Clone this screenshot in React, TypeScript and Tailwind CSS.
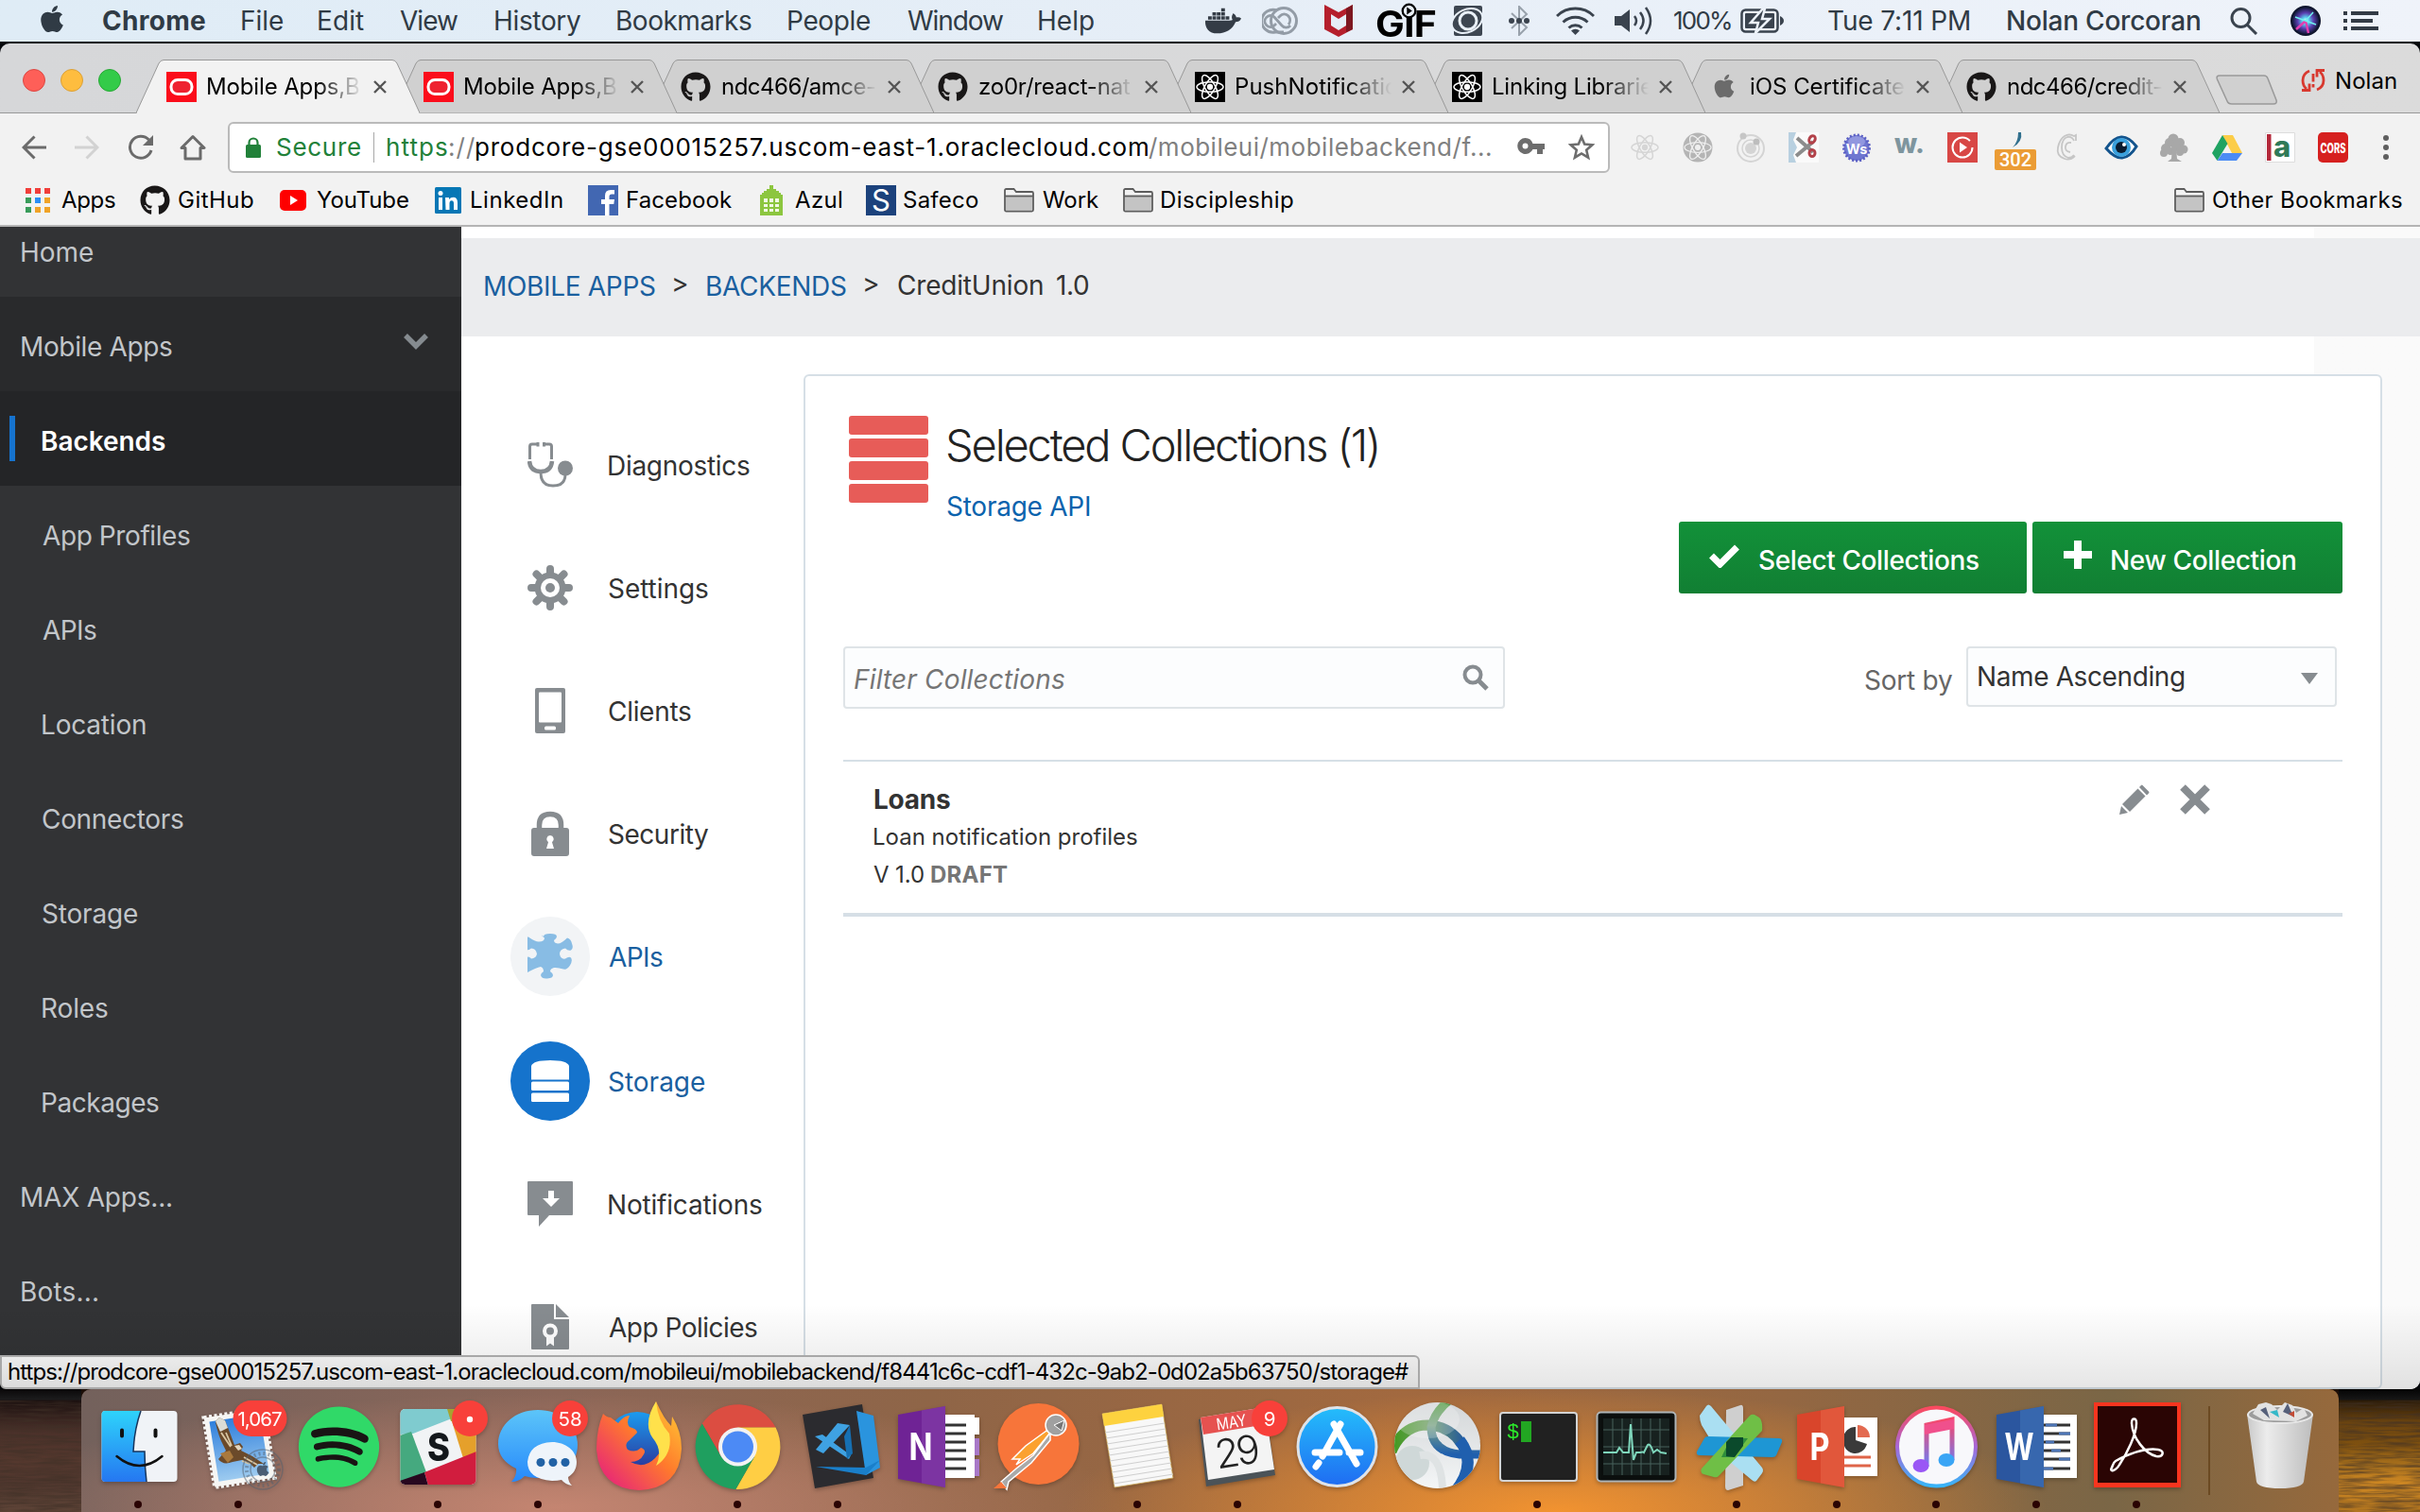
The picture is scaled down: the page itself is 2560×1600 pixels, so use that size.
import React, { useLayoutEffect, useRef, useState } from "react";
import { FaApple, FaDocker, FaGithub, FaSpotify } from "react-icons/fa";

/* Text whose ink is tracked to span exactly `w` pixels. */
function T({ w, className = "", children }: { w: number; className?: string; children: string }) {
  const ref = useRef<HTMLSpanElement>(null);
  const [fit, setFit] = useState({ ls: 0, ml: 0 });
  useLayoutEffect(() => {
    if (!ref.current) return;
    const cs = getComputedStyle(ref.current);
    const ctx = document.createElement("canvas").getContext("2d");
    if (!ctx) return;
    ctx.font = `${cs.fontStyle} ${cs.fontWeight} ${cs.fontSize} ${cs.fontFamily}`;
    const m = ctx.measureText(children);
    const bearings = m.width - (m.actualBoundingBoxRight + m.actualBoundingBoxLeft);
    const ink = ref.current.getBoundingClientRect().width - bearings;
    setFit({ ls: children.length > 1 ? (w - ink) / (children.length - 1) : 0, ml: m.actualBoundingBoxLeft });
  }, [w, children]);
  return (
    <span className={`block shrink-0 whitespace-pre ${className}`} style={{ width: w, letterSpacing: fit.ls, textIndent: fit.ml }}>
      <span ref={ref}>{children}</span>
    </span>
  );
}

/* ---------- menu bar ---------- */
const menus = [
  { t: "Chrome", w: 108, box: "w-[147px] font-bold" },
  { t: "File", w: 43, box: "w-[81px]" },
  { t: "Edit", w: 48, box: "w-[86px]" },
  { t: "View", w: 61, box: "w-[101px]" },
  { t: "History", w: 90, box: "w-[129px]" },
  { t: "Bookmarks", w: 142, box: "w-[181px]" },
  { t: "People", w: 86, box: "w-[126px]" },
  { t: "Window", w: 101, box: "w-[139px]" },
  { t: "Help", w: 58, box: "w-[176px]" },
];

function MenuBar() {
  return (
    <div className="flex h-[44px] shrink-0 items-center bg-linear-to-r from-[#dfecf6] via-[#e6eef7] to-[#eff3fa] pl-[42px] text-[28px] leading-none text-[#303b45]">
      <FaApple className="mr-[38px] -mt-[4px] h-[32px] w-[32px] shrink-0 -ml-[3px]" />
      {menus.map((m) => (
        <div key={m.t} className={`shrink-0 ${m.box}`}>
          <T w={m.w}>{m.t}</T>
        </div>
      ))}
      <FaDocker className="h-[38px] w-[38px] shrink-0 text-[#343c46]" />
      <svg className="ml-[22px] h-[30px] w-[38px] shrink-0" viewBox="0 0 38 30" fill="none" stroke="#939ca6" strokeWidth="3">
        <circle cx="23" cy="15" r="13.500" />
        <path d="M16 4A12 12 0 1 0 14 27h9" />
        <path d="M30 20a6 6 0 0 1-9 0l-8-9a6 6 0 1 0 0 9l2-2M17 12l2-2a6 6 0 0 1 9 0 7 7 0 0 1 0 9" strokeWidth="2.800" />
      </svg>
      <svg className="ml-[28px] h-[34px] w-[30px] shrink-0" viewBox="0 0 30 34">
        <path d="M0 0l15 8L30 0v26l-15 8L0 26z" fill="#b51f2c" />
        <path d="M7 10l8 5 8-5v12l-8 5-8-5z" fill="#e6eef7" />
        <path d="M23 4l7-4v26l-7 3z" fill="#7d1720" />
      </svg>
      <div className="relative ml-[25px] h-[38px] w-[62px] shrink-0 text-black">
        <span className="absolute top-[4px] -left-[1px] origin-left scale-x-[1.08] text-[38px] leading-[36px] font-bold tracking-[-0.5px]">GıF</span>
        <svg className="absolute top-0 left-[26px] h-[17px] w-[17px]" viewBox="0 0 15 15">
          <circle cx="7.500" cy="7.500" r="6" fill="#e9f0f8" stroke="#000" strokeWidth="2" />
          <path d="M5.500 4v7l5-3.500z" />
        </svg>
      </div>
      <svg className="ml-[16px] h-[32px] w-[36px] shrink-0" viewBox="0 0 36 32">
        <rect x="4" y="0" width="30" height="32" rx="2" fill="#3d4651" />
        <ellipse cx="18" cy="16" rx="17" ry="12" fill="#3d4651" stroke="#e9f0f8" strokeWidth="2" transform="rotate(-25 18 16)" />
        <circle cx="19" cy="16" r="9" fill="none" stroke="#e9f0f8" strokeWidth="3" />
      </svg>
      <svg className="ml-[26px] h-[32px] w-[22px] shrink-0" viewBox="0 0 22 32" fill="none">
        <path d="M3 8l16 15-8 8V1l8 8L3 24" stroke="#98a1ab" strokeWidth="2" />
        <g fill="#3a434e">
          <circle cx="3" cy="16" r="3" />
          <circle cx="11" cy="16" r="3" />
          <circle cx="19" cy="16" r="3" />
        </g>
      </svg>
      <svg className="ml-[28px] h-[30px] w-[41px] shrink-0" viewBox="0 0 41 30" fill="none" stroke="#3a434e" strokeWidth="3">
        <path d="M1 10a28 28 0 0 1 39 0M7.500 16.500a19 19 0 0 1 26 0M13.500 22.500a10.500 10.500 0 0 1 14 0" />
        <path d="M20.500 30l-4.500-4.500a6.500 6.500 0 0 1 9 0z" fill="#3a434e" stroke="none" />
      </svg>
      <svg className="ml-[21px] h-[30px] w-[42px] shrink-0" viewBox="0 0 42 30" fill="none" stroke="#3a434e" strokeWidth="2.500">
        <path d="M0 10h7l9-7v24l-9-7H0z" fill="#3a434e" stroke="none" />
        <path d="M21 10q4 5 0 10M27 6q7 9 0 18M33 1q10 14 0 28" />
      </svg>
      <T w={60} className="ml-[21px] text-[26px]">100%</T>
      <svg className="ml-[10px] h-[26px] w-[46px] shrink-0" viewBox="0 0 46 26">
        <rect x="1.500" y="1.500" width="38" height="23" rx="4" fill="none" stroke="#3a434e" strokeWidth="2.500" />
        <rect x="5" y="5" width="31" height="16" rx="1" fill="#3a434e" />
        <path d="M42 8v10q4-2 4-5t-4-5z" fill="#3a434e" />
        <path d="M24 0L11 15h8l-3 11L31 11h-8l3-11z" fill="#3a434e" stroke="#edf2f9" strokeWidth="2.500" />
      </svg>
      <T w={149} className="ml-[47px]">Tue 7:11 PM</T>
      <T w={203} className="ml-[41px] font-medium">Nolan Corcoran</T>
      <svg className="ml-[32px] h-[30px] w-[30px] shrink-0" viewBox="0 0 30 30" fill="none" stroke="#3a434e" strokeWidth="3">
        <circle cx="11.500" cy="12" r="9.500" />
        <path d="M18 19l10 10" />
      </svg>
      <svg className="ml-[34px] h-[32px] w-[32px] shrink-0" viewBox="0 0 32 32">
        <defs>
          <radialGradient id="siri">
            <stop offset="0" stopColor="#fff" />
            <stop offset=".25" stopColor="#5ad0f0" />
            <stop offset=".6" stopColor="#5a3fb0" />
            <stop offset="1" stopColor="#141a3c" />
          </radialGradient>
        </defs>
        <circle cx="16" cy="16" r="16" fill="#10162e" />
        <circle cx="16" cy="16" r="14" fill="url(#siri)" />
        <path d="M16 16l3 13M16 16L6 25" stroke="#e13fb0" strokeWidth="2.500" />
        <path d="M16 16l8-9M16 16L5 12M16 16l11 4" stroke="#6ff0ee" strokeWidth="1.500" />
      </svg>
      <svg className="ml-[24px] h-[20px] w-[37px] shrink-0" viewBox="0 0 37 20" fill="#333b45">
        <path d="M0 0h4v4H0zM8 0h29v4H8zM0 8h4v4H0zM8 8h23v4H8zM0 16h4v4H0zM8 16h29v4H8z" />
      </svg>
    </div>
  );
}

/* ---------- tabs ---------- */
const Oracle = () => (
  <svg viewBox="0 0 32 32" className="h-full w-full">
    <path d="M0 0h32v32H0z" fill="#fb0d1b" />
    <rect x="5" y="8.500" width="22" height="15" rx="7" fill="#ee2230" stroke="#fff" strokeWidth="3" />
  </svg>
);
const Atom = ({ color, sw = 1.5 }: { color: string; sw?: number }) => (
  <g fill="none" stroke={color} strokeWidth={sw}>
    <ellipse cx="16" cy="16" rx="14" ry="5.300" />
    <ellipse cx="16" cy="16" rx="14" ry="5.300" transform="rotate(60 16 16)" />
    <ellipse cx="16" cy="16" rx="14" ry="5.300" transform="rotate(120 16 16)" />
    <circle cx="16" cy="16" r="2.400" fill={color} />
  </g>
);
const ReactFav = () => (
  <svg viewBox="0 0 32 32" className="h-full w-full">
    <path d="M0 0h32v32H0z" />
    <Atom color="#fff" />
  </svg>
);
const Hub = () => <FaGithub className="h-full w-full text-[#191717]" />;
const tabs = [
  { t: "Mobile Apps,B", w: 160, I: Oracle, z: "z-[9]" },
  { t: "Mobile Apps,B", w: 160, I: Oracle, z: "z-[8]" },
  { t: "ndc466/amce-", w: 162, I: Hub, z: "z-[7]" },
  { t: "zo0r/react-nat", w: 160, I: Hub, z: "z-[6]" },
  { t: "PushNotificatio", w: 171, I: ReactFav, z: "z-[5]" },
  { t: "Linking Librarie", w: 168, I: ReactFav, z: "z-[4]" },
  { t: "iOS Certificate", w: 162, I: () => <FaApple className="-mt-[1px] h-[28px] w-[24px] text-[#6b6b6b]" />, z: "z-[3]" },
  { t: "ndc466/credit-", w: 163, I: Hub, z: "z-[2]" },
];

function TabStrip() {
  return (
    <div className="relative flex h-[74px] shrink-0 items-end rounded-t-[10px] bg-linear-to-r from-[#d6d7d9] to-[#dbdbdb]">
      <div className="absolute inset-x-0 bottom-0 z-[8] h-px bg-[#999]" />
      <div className="flex h-full w-[144px] shrink-0 items-center gap-[16px] pt-[3px] pl-[24px]">
        <div className="size-[24px] rounded-full border border-[#dd4742] bg-[#fe5f58]" />
        <div className="size-[24px] rounded-full border border-[#dba036] bg-[#febd3f]" />
        <div className="size-[24px] rounded-full border border-[#26a934] bg-[#33cb49]" />
      </div>
      {tabs.map(({ t, w, I, z }, i) => (
        <div key={i} className={`relative -mr-[28px] flex h-[57px] w-[300px] shrink-0 items-center pl-[32px] ${z}`}>
          <svg className="absolute inset-0" width="300" height="57" viewBox="0 0 300 57">
            <path d="M0 56.500L24 4Q26 .5 29 .5H271Q274 .5 276 4L300 56.500" fill={i === 0 ? "#f2f2f2" : "#d0d0d0"} stroke="#989898" />
            {i === 0 && <path d="M1 56.500h298" stroke="#f2f2f2" />}
          </svg>
          <div className="relative flex size-[32px] shrink-0 items-center justify-center">
            <I />
          </div>
          <div className="relative ml-[12px] w-[164px] overflow-hidden mask-r-from-70% text-[24px] leading-[32px] whitespace-nowrap text-black">
            <T w={w}>{t}</T>
          </div>
          <svg className="relative ml-[11px] h-[14px] w-[14px] shrink-0" viewBox="0 0 14 14">
            <path d="M1 1l12 12M13 1L1 13" stroke="#555" strokeWidth="2.400" />
          </svg>
        </div>
      ))}
      <svg className="ml-[24px] mb-[9px] h-[32px] w-[66px] shrink-0" viewBox="0 0 66 32">
        <path d="M4 1h47q3 0 4 3l9 23q1 4-3 4H17q-4 0-5-3L1.500 5Q0 1 4 1z" fill="#d0d0d0" stroke="#999" strokeWidth="1.500" />
      </svg>
      <svg className="ml-[24px] mb-[23px] h-[24px] w-[26px] shrink-0" viewBox="0 0 26 24" fill="none" stroke="#d8392f" strokeWidth="2.800">
        <path d="M9 2Q2 5 2 12q0 6 4 9M1 22.500h8v-7M17 22q7-3 7-10 0-6-4-9M25 1.500h-8v7" />
        <path d="M13 5v8.500M13 16v3.500" />
      </svg>
      <T w={63} className="ml-[12px] mb-[16px] text-[24px] leading-[36px] text-black">Nolan</T>
    </div>
  );
}

/* ---------- toolbar ---------- */
const exts: React.ReactNode[] = [
  <Atom color="#d5d5d5" />,
  <><circle cx="16" cy="16" r="15.500" fill="#b5b5b5" /><Atom color="#efefef" sw={1.3} /></>,
  <g fill="none" stroke="#d4d4d4" strokeWidth="2"><circle cx="16" cy="17" r="14" /><circle cx="16" cy="17" r="6" fill="#d4d4d4" stroke="none" /><circle cx="16" cy="17" r="9" strokeWidth="1.500" /><circle cx="8" cy="4" r="3.500" fill="#c6c6c6" stroke="none" /><circle cx="22" cy="10" r="3.500" fill="#bdbdbd" stroke="none" /></g>,
  <><path d="M0 0h32v32H0z" fill="#fafafa" /><path d="M0 0h8l-3 8 4 8-4 8 3 8H0z" fill="#b8d0e0" /><path d="M9 6l17 15M8 25L26 10" stroke="#8c8c8c" strokeWidth="4" /><g fill="none" stroke="#b3424a" strokeWidth="3"><ellipse cx="25" cy="7.500" rx="3" ry="4" transform="rotate(30 25 7.500)" /><ellipse cx="25" cy="22" rx="3" ry="3.500" /></g></>,
  <><circle cx="16" cy="16.500" r="13.500" fill="#6f76d0" stroke="#5a5fc4" strokeWidth="3" strokeDasharray="2 2" /><ellipse cx="16" cy="10" rx="9" ry="6" fill="#a9aeea" opacity=".6" /><text x="16" y="22.500" textAnchor="middle" fontSize="14.500" fontWeight="700" fill="#fff">Ws</text></>,
  <text x="16" y="22" textAnchor="middle" fontSize="28" fontWeight="800" fill="#7e959e">w.</text>,
  <><path d="M0 0h32v32H0z" fill="#d84745" /><circle cx="16" cy="16" r="10.500" fill="none" stroke="#fff" strokeWidth="2" strokeDasharray="58 8" /><path d="M13 10.500v11l8-5.500z" fill="#fff" /></>,
  <path d="M22 0q2 10-9 16 6-6 6-16z" fill="#31708e" />,
  <path d="M24 9V3l-2 1Q17 1 12 4T5 16t7 12q6 2 11-3M22 9q-2-5-7-4-6 2-6 11t7 11q4 0 6-3M19 11q-5-1-6 4t5 6" fill="none" stroke="#c6c6c6" strokeWidth="1.800" />,
  <><path d="M0 17Q16-6 32 15 18 38 0 17z" fill="#fff" stroke="#13548d" strokeWidth="3" /><circle cx="16" cy="16" r="10" fill="#3aa0dc" /><circle cx="16" cy="16" r="6" fill="#0a1c30" /><circle cx="19" cy="13" r="2" fill="#fff" /></>,
  <g fill="#a8a8a8"><circle cx="15" cy="7" r="5.500" /><circle cx="11" cy="11" r="5" /><circle cx="22" cy="11" r="5" /><circle cx="7" cy="17" r="5" /><circle cx="18" cy="15" r="5" /><circle cx="26" cy="18" r="4.500" /><circle cx="5" cy="22" r="4" /><circle cx="12" cy="20" r="4" /><circle cx="22" cy="21" r="4" /><path d="M14 17h4l1 11 5 3H9l4-3z" /></g>,
  <><path d="M11 3h11l10 19H21z" fill="#fccd48" /><path d="M11 3L0 22l5.500 8L16.500 12z" fill="#1fa362" /><path d="M11 22h21l-6 8H5.500z" fill="#4b8bf5" /></>,
  <><path d="M.5 .5h31v31H.5z" fill="#fff" stroke="#ddd" strokeWidth="1" /><path d="M2 2h4.500v28H2z" fill="#b3283a" /><text x="18" y="26" textAnchor="middle" fontSize="31" fontWeight="800" fill="#2f7a58">a</text></>,
  <><rect width="32" height="32" rx="5" fill="#d6201f" /><text x="16" y="21.500" textAnchor="middle" fontSize="14" fontWeight="800" fill="#fff" textLength="27" lengthAdjust="spacingAndGlyphs">CORS</text></>,
];

function Toolbar() {
  return (
    <div className="flex h-[71px] shrink-0 items-center bg-[#f2f2f2]">
      <svg className="ml-[23px] h-[26px] w-[26px] shrink-0" viewBox="0 0 26 26" fill="none" stroke="#6b6b6b" strokeWidth="3">
        <path d="M26 13H3M13.500 1.500L2 13l11.500 11.500" />
      </svg>
      <svg className="ml-[30px] h-[26px] w-[26px] shrink-0" viewBox="0 0 26 26" fill="none" stroke="#d2d2d2" strokeWidth="3">
        <path d="M0 13h23M12.500 1.500L24 13 12.500 24.500" />
      </svg>
      <svg className="ml-[30px] h-[28px] w-[28px] shrink-0" viewBox="0 0 28 28" fill="none" stroke="#6b6b6b" strokeWidth="3">
        <path d="M25 17a11.500 11.500 0 1 1-2.500-11" />
        <path d="M27 1v11H16z" fill="#6b6b6b" stroke="none" />
      </svg>
      <svg className="ml-[27px] h-[28px] w-[28px] shrink-0" viewBox="0 0 28 28" fill="none" stroke="#6b6b6b" strokeWidth="3">
        <path d="M2 14.500L14 2.500l12 12h-4V26H6V14.500z" strokeLinejoin="round" />
      </svg>
      <div className="ml-[23px] flex h-[54px] w-[1462px] shrink-0 items-center rounded-[6px] border-2 border-[#bababa] bg-white text-[26px] leading-none">
        <svg className="ml-[17px] h-[22px] w-[16px] shrink-0" viewBox="0 0 16 22">
          <rect y="8" width="16" height="14" rx="1.500" fill="#218139" />
          <path d="M3.500 9V6a4.500 4.500 0 0 1 9 0v3" fill="none" stroke="#218139" strokeWidth="2.200" />
        </svg>
        <T w={88} className="ml-[17px] pt-px text-[#218139]">Secure</T>
        <div className="mr-[14px] ml-[14px] h-[32px] w-px bg-[#a9a9a9]" />
        <T w={63} className="pt-px text-[#218139]">https</T>
        <T w={26} className="ml-[3px] pt-px text-[#808080]">://</T>
        <T w={710} className="ml-[2px] pt-px text-black">prodcore-gse00015257.uscom-east-1.oraclecloud.com</T>
        <T w={362} className="ml-[1px] pt-px text-[#808080]">/mobileui/mobilebackend/f...</T>
        <svg className="ml-[28px] h-[18px] w-[29px] shrink-0 -mt-[1px]" viewBox="0 0 29 18">
          <path d="M8.500 0a8.500 8.500 0 0 1 8 6H29v6h-2v5h-6v-5h-4.500a8.500 8.500 0 1 1-8-12zm0 5.500a3 3 0 1 0 0 6 3 3 0 0 0 0-6z" fill="#6d6d6d" />
        </svg>
        <svg className="ml-[25px] h-[28px] w-[28px] shrink-0" viewBox="0 0 28 28" fill="none" stroke="#6d6d6d" strokeWidth="2.600">
          <path d="M14 3l3.200 7.600 8.200.7-6.200 5.400 1.900 8L14 20.400l-7.100 4.300 1.900-8-6.200-5.400 8.200-.7z" />
        </svg>
      </div>
      <div className="ml-[21px] flex shrink-0 gap-[24px]">
        {exts.map((e, i) => (
          <div key={i} className="relative size-[32px]">
            <svg viewBox="0 0 32 32" className="h-full w-full overflow-visible">{e}</svg>
            {i === 7 && (
              <div className="absolute top-[18px] -left-[6px] flex h-[22px] w-[44px] items-center justify-center rounded-[2px] bg-[#eb9c35] font-['Roboto'] text-[20px] font-medium text-white">302</div>
            )}
          </div>
        ))}
      </div>
      <svg className="ml-[36px] h-[28px] w-[8px] shrink-0" viewBox="0 0 8 28" fill="#5f5f5f">
        <circle cx="4" cy="4" r="3" />
        <circle cx="4" cy="14" r="3" />
        <circle cx="4" cy="24" r="3" />
      </svg>
    </div>
  );
}

/* ---------- bookmarks ---------- */
const Folder = ({ className = "" }: { className?: string }) => (
  <svg className={`h-[26px] w-[32px] shrink-0 ${className}`} viewBox="0 0 32 26">
    <path d="M1 23V2.500Q1 1 2.500 1h8L13 4h16.500Q31 4 31 5.500V23q0 1.500-1.500 1.500h-27Q1 24.500 1 23z" fill="#f2f2f2" stroke="#5d5d5d" strokeWidth="1.800" />
    <path d="M2 9h28v14.500H2z" fill="#c4c4c4" />
    <path d="M1 8.500h30" stroke="#5d5d5d" strokeWidth="1.800" />
  </svg>
);

function Bookmarks() {
  return (
    <div className="flex h-[49px] shrink-0 items-center border-b-2 border-[#b4b4b4] bg-[#f2f2f2] pb-[6px] text-[24px] leading-none text-black">
      <svg className="ml-[27px] h-[26px] w-[26px] shrink-0" viewBox="0 0 26 26">
        <path d="M0 0h6v6H0zM10 0h6v6h-6zM20 0h6v6h-6z" fill="#f13e3a" />
        <path d="M0 10h6v6H0zM0 20h6v6H0z" fill="#399c5a" />
        <path d="M10 10h6v6h-6z" fill="#2b8ff5" />
        <path d="M20 10h6v6h-6zM10 20h6v6h-6zM20 20h6v6h-6z" fill="#f0a327" />
      </svg>
      <T w={57} className="ml-[12px]">Apps</T>
      <FaGithub className="ml-[26px] h-[32px] w-[32px] shrink-0 text-[#191717]" />
      <T w={79} className="ml-[9px]">GitHub</T>
      <svg className="ml-[28px] h-[22px] w-[28px] shrink-0" viewBox="0 0 28 22">
        <rect width="28" height="22" rx="5" fill="#fe0000" />
        <path d="M11 6v10l8-5z" fill="#fff" />
      </svg>
      <T w={97} className="ml-[11px]">YouTube</T>
      <svg className="ml-[28px] h-[28px] w-[28px] shrink-0" viewBox="0 0 28 28">
        <rect width="28" height="28" rx="1.500" fill="#0677b5" />
        <path d="M4 11h4v13H4zM11 11h4v2q1.500-2.300 4.500-2.300 4.500 0 4.500 5.800V24h-4v-6.800q0-3-2.300-3-2.200 0-2.200 3V24h-4z" fill="#fff" />
        <circle cx="6" cy="6.500" r="2.500" fill="#fff" />
      </svg>
      <T w={96} className="ml-[11px]">LinkedIn</T>
      <svg className="ml-[27px] h-[32px] w-[32px] shrink-0" viewBox="0 0 32 32">
        <path d="M0 0h32v32H0z" fill="#4267b2" />
        <path d="M18 32V20h-4v-5h4v-4q0-6 6-6h4v4.500h-3q-2.500 0-2.500 2.500v3H28l-.7 5h-4.800v12z" fill="#fff" />
      </svg>
      <T w={110} className="ml-[10px]">Facebook</T>
      <svg className="ml-[30px] h-[32px] w-[24px] shrink-0" viewBox="0 0 24 32">
        <path d="M0 10h2V8h2V6h3V4h3V0h4v4h3v2h3v2h2v2h2v22H0z" fill="#8cc63f" />
        <path d="M4 14h4v4H4zM10 14h4v4h-4zM16 14h4v4h-4zM4 20h4v3H4zM10 20h4v3h-4zM16 20h4v3h-4zM4 25h4v3H4zM10 25h4v3h-4zM16 25h4v3h-4z" fill="#f0f8e4" />
      </svg>
      <T w={49} className="ml-[13px]">Azul</T>
      <div className="ml-[26px] flex size-[32px] shrink-0 items-center justify-center bg-[#1c427c] text-[31px] text-white">S</div>
      <T w={79} className="ml-[8px]">Safeco</T>
      <Folder className="ml-[27px]" />
      <T w={59} className="ml-[9px]">Work</T>
      <Folder className="ml-[26px]" />
      <T w={139} className="ml-[9px]">Discipleship</T>
      <Folder className="ml-auto" />
      <T w={200} className="mr-[19px] ml-[9px]">Other Bookmarks</T>
    </div>
  );
}

/* ---------- page ---------- */
const side = [
  { t: "Home", w: 75, sub: false, c: "h-[74px] pb-[25px]" },
  { t: "Mobile Apps", w: 159, sub: false, c: "h-[100px] bg-[#292a2c]" },
  { t: "Backends", w: 130, sub: true, c: "h-[100px] bg-[#242527] font-semibold text-white" },
  { t: "App Profiles", w: 156, sub: true, c: "h-[100px]" },
  { t: "APIs", w: 57, sub: true, c: "h-[100px]" },
  { t: "Location", w: 109, sub: true, c: "h-[100px]" },
  { t: "Connectors", w: 149, sub: true, c: "h-[100px]" },
  { t: "Storage", w: 100, sub: true, c: "h-[100px]" },
  { t: "Roles", w: 69, sub: true, c: "h-[100px]" },
  { t: "Packages", w: 123, sub: true, c: "h-[100px]" },
  { t: "MAX Apps...", w: 158, sub: false, c: "h-[100px]" },
  { t: "Bots...", w: 80, sub: false, c: "h-[100px]" },
];

function Sidebar() {
  return (
    <div className="flex w-[488px] shrink-0 flex-col bg-[#323335] text-[28px] leading-none text-[#c2c6ca]">
      {side.map((s) => (
        <div key={s.t} className={`relative flex shrink-0 items-center pt-[5px] ${s.sub ? "pl-[45px]" : "pl-[23px]"} ${s.c}`}>
          {s.t === "Backends" && <div className="absolute top-[26px] left-[10px] h-[48px] w-[6px] bg-[#1673ce]" />}
          <T w={s.w}>{s.t}</T>
          {s.t === "Mobile Apps" && (
            <svg className="mr-[34px] mb-[12px] ml-auto h-[18px] w-[28px]" viewBox="0 0 28 18">
              <path d="M3 3l11 11L25 3" fill="none" stroke="#858b90" strokeWidth="5.500" />
            </svg>
          )}
        </div>
      ))}
    </div>
  );
}

const G = "#878c90";
const nav = [
  {
    t: "Diagnostics", w: 149, c: "",
    icon: (
      <g fill="none" stroke={G} strokeWidth="3">
        <path d="M10 2H5q-2.500 0-2.500 2.500V18M18 2h5q2.500 0 2.500 2.500V18M11 0v4.500M17.500 0v4.500" />
        <path d="M2 20q1 11 12 11t12-11" strokeWidth="4.500" />
        <path d="M14 32q0 14 13 14t13-12" />
        <circle cx="40" cy="27.500" r="8" fill={G} stroke="none" />
      </g>
    ),
  },
  {
    t: "Settings", w: 105, c: "",
    icon: (
      <>
        <g stroke={G} strokeWidth="8" strokeLinecap="round">
          <path d="M24 4v40M4 24h40M9.500 9.500l29 29M38.500 9.500l-29 29" />
        </g>
        <circle cx="24" cy="24" r="16.500" fill={G} />
        <circle cx="24" cy="24" r="10" fill="#fff" />
        <circle cx="24" cy="24" r="5" fill={G} />
      </>
    ),
  },
  {
    t: "Clients", w: 87, c: "",
    icon: (
      <>
        <rect x="8" width="32" height="48" rx="2" fill={G} />
        <rect x="12" y="4.500" width="24" height="32" rx="1" fill="#fff" />
        <rect x="18" y="40.500" width="12" height="4" rx="1.500" fill="#fff" />
      </>
    ),
  },
  {
    t: "Security", w: 105, c: "",
    icon: (
      <>
        <path d="M12.500 20v-5q0-11.500 11.500-11.500T35.500 15v5" fill="none" stroke={G} strokeWidth="5.500" />
        <rect x="4" y="18" width="40" height="30" rx="3" fill={G} />
        <path d="M24 26a4 4 0 0 1 2 7.300L28 40h-8l2-6.700A4 4 0 0 1 24 26z" fill="#fff" />
      </>
    ),
  },
  {
    t: "APIs", w: 57, c: "bg-[#f2f4f6]",
    icon: (
      <path
        d="M17 3q0-3 7-3t7 3q0 2-3 4 0 3 4 3.500 4 0 10-6 4 1 5 6 2 5-1 7-3 1-6-2-6 1-6 6 1 6 6 5 4-3 6-1 2 3-1 8-3 5-7 4-6-2-10-1.500-4 1-4 4 3 2 3 4 0 3-6 3.500t-7-3.500q0-2 3-4 0-4-3-5-5 1-14 6-4 0-4-4-1-7 2-11 3-3 6 .5 5-.5 6-5-1-6-6-6-3 3-6 1-2-3-1-10 1-3 4-3 7 5 11 5 6 0 6-4-3-2-3-3z"
        fill="#88bce4"
      />
    ),
  },
  {
    t: "Storage", w: 101, c: "bg-[#1573cc]",
    icon: (
      <g fill="#fff">
        <path d="M4 8Q6 2 24 2t20 6v14.500H4z" />
        <rect x="4" y="24.500" width="40" height="9.500" rx="1.500" />
        <rect x="4" y="36.500" width="40" height="9.500" rx="1.500" />
      </g>
    ),
  },
  {
    t: "Notifications", w: 162, c: "",
    icon: (
      <>
        <path d="M1 0h46q1 0 1 1v34q0 1-1 1H23L12 48V36H1q-1 0-1-1V1q0-1 1-1z" fill={G} />
        <path d="M22 10h6v8h6l-9 9-9-9h6z" fill="#fff" />
      </>
    ),
  },
  {
    t: "App Policies", w: 157, c: "",
    icon: (
      <>
        <path d="M5 0h23v16h16v31q0 1-1 1H5q-1 0-1-1V1q0-1 1-1zM30 0l14 14H30z" fill={G} />
        <path d="M20 34v10.500l4-3 4 3V34z" fill="#fff" />
        <circle cx="24" cy="28.500" r="6" fill={G} stroke="#fff" strokeWidth="4" />
      </>
    ),
  },
];

function SideNav() {
  return (
    <div className="flex w-[362px] shrink-0 flex-col pt-[71px] pl-[52px] text-[28px] leading-none text-[#333]">
      {nav.map((n) => (
        <div key={n.t} className={`flex h-[130px] shrink-0 items-center ${n.t === "Storage" ? "mt-[2px]" : ""}`}>
          <div className={`flex size-[84px] items-center justify-center rounded-full ${n.c}`}>
            <svg width="48" height="48" viewBox="0 0 48 48">{n.icon}</svg>
          </div>
          <T w={n.w} className={`ml-[20px] pt-[2px] ${n.c ? "text-[#1a5f9f]" : ""}`}>{n.t}</T>
        </div>
      ))}
    </div>
  );
}

function Panel() {
  return (
    <div className="mt-[40px] mr-[40px] flex grow flex-col rounded-[6px] border-2 border-[#d6dfe6] bg-white px-[40px] text-[28px] leading-none text-[#333]">
      <div className="flex h-[154px] shrink-0">
        <div className="mt-[42px] ml-[6px] flex w-[84px] flex-col gap-[4px]">
          <div className="h-[20px] rounded-[3px] bg-[#e75c58]" />
          <div className="h-[20px] rounded-[3px] bg-[#e75c58]" />
          <div className="h-[20px] rounded-[3px] bg-[#e75c58]" />
          <div className="h-[20px] rounded-[3px] bg-[#e75c58]" />
        </div>
        <div className="ml-[20px] flex flex-col pt-[45px]">
          <T w={455} className="text-[47px] leading-[56px] font-light text-[#222] [font-variation-settings:'opsz'_32]">Selected Collections (1)</T>
          <T w={151} className="mt-[20px] leading-[34px] text-[#0b63ad]">Storage API</T>
        </div>
      </div>
      <div className="flex h-[76px] shrink-0 justify-end gap-[6px] font-medium text-white">
        <div className="flex w-[368px] items-center rounded-[3px] bg-linear-to-b from-[#129139] to-[#117f33] pt-[5px]">
          <svg className="-mt-[9px] ml-[32px] h-[26px] w-[32px]" viewBox="0 0 32 26">
            <path d="M2.500 13l9 9L29.500 4" fill="none" stroke="#fff" strokeWidth="7" strokeLinejoin="miter" />
          </svg>
          <T w={232} className="ml-[21px]">Select Collections</T>
        </div>
        <div className="flex w-[328px] items-center rounded-[3px] bg-linear-to-b from-[#129139] to-[#117f33] pt-[5px]">
          <svg className="-mt-[11px] ml-[32px] h-[32px] w-[32px]" viewBox="0 0 32 32">
            <path d="M16 1v30M1 16h30" stroke="#fff" strokeWidth="8" />
          </svg>
          <T w={194} className="ml-[20px]">New Collection</T>
        </div>
      </div>
      <div className="mt-[56px] flex shrink-0 items-start">
        <div className="flex h-[66px] w-[700px] items-center rounded-[4px] border-2 border-[#dfe4e7] bg-[#fcfdfe] text-[#757575]">
          <T w={222} className="ml-[10px] pt-[3px] italic">Filter Collections</T>
          <svg className="mr-[15px] ml-auto h-[28px] w-[28px]" viewBox="0 0 28 28" fill="none" stroke="#878c90" strokeWidth="4">
            <circle cx="11" cy="11" r="8.500" />
            <path d="M17 17l9 9" strokeWidth="5" />
          </svg>
        </div>
        <T w={92} className="mt-[22px] ml-auto text-[#666]">Sort by</T>
        <div className="mr-[6px] ml-[15px] flex h-[64px] w-[392px] items-center rounded-[4px] border-2 border-[#dfe4e7] bg-[#fcfdfe]">
          <T w={217} className="ml-[11px]">Name Ascending</T>
          <svg className="mr-[18px] mt-[4px] ml-auto h-[12px] w-[18px]" viewBox="0 0 18 12">
            <path d="M0 0h18L9 12z" fill="#878c90" />
          </svg>
        </div>
      </div>
      <div className="mt-[54px] flex h-[166px] shrink-0 border-t-2 border-b-4 border-[#d6dfe6] pt-[24px] pl-[33px]">
        <div className="flex flex-col">
          <T w={80} className="leading-[32px] font-bold">Loans</T>
          <T w={278} className="mt-[8px] text-[24px] leading-[32px]">Loan notification profiles</T>
          <div className="-ml-[1px] mt-[8px] flex text-[24px] leading-[32px]">
            <T w={53}>V 1.0</T>
            <T w={81} className="ml-[8px] font-bold text-[#757575]">DRAFT</T>
          </div>
        </div>
        <svg className="ml-auto h-[32px] w-[32px]" viewBox="0 0 32 32" fill={G}>
          <path d="M24.500 1l6.500 6.500q1 1 0 2l-2 2L21 3l2-2q1-1 1.500 0zM19.500 4.500l8 8L11 29 3 21zM2 23l7 7-9 2z" />
        </svg>
        <svg className="mr-[140px] ml-[32px] h-[32px] w-[32px]" viewBox="0 0 32 32">
          <path d="M3 3l26 26M29 3L3 29" stroke={G} strokeWidth="8" />
        </svg>
      </div>
    </div>
  );
}

function Page() {
  return (
    <div className="flex h-[1230px] shrink-0 overflow-hidden rounded-b-[10px] bg-white">
      <Sidebar />
      <div className="flex grow flex-col">
        <div className="flex h-[12px] shrink-0 justify-end bg-white">
          <div className="w-[112px] bg-[#fafafa]" />
        </div>
        <div className="flex h-[104px] shrink-0 items-center bg-[#ebecee] pb-[3px] pl-[25px] text-[28px] leading-none text-[#1a5f9f]">
          <T w={180}>MOBILE APPS</T>
          <T w={14} className="ml-[20px] -mt-[6px] text-[#333]">&gt;</T>
          <T w={147} className="ml-[21px]">BACKENDS</T>
          <T w={14} className="ml-[20px] -mt-[6px] text-[#333]">&gt;</T>
          <T w={153} className="ml-[21px] -mt-[2px] text-[#333]">CreditUnion</T>
          <T w={33} className="ml-[15px] -mt-[2px] text-[#333]">1.0</T>
        </div>
        <div className="flex grow bg-linear-to-r from-white from-[1960px] to-[#fafafa] to-[1960px]">
          <SideNav />
          <Panel />
        </div>
      </div>
    </div>
  );
}

/* ---------- dock ---------- */
const Badge = ({ x, w = 38, t }: { x: number; w?: number; t: string }) => (
  <g>
    <rect x={x - w / 2} y="12" width={w} height="38" rx="19" fill="#f8403a" />
    <text x={x} y="38.500" textAnchor="middle" fontSize="20.500" fill="#fff" textLength={t.length > 3 ? 47 : undefined}>{t}</text>
  </g>
);
const Office = ({ c1, c2, l, children }: { c1: string; c2: string; l: string; children: React.ReactNode }) => (
  <g>
    {children}
    <path d="M10 27L60 18v86L10 95z" fill={c1} />
    <path d="M35 22.500L60 18v86L35 99.500z" fill={c2} opacity=".5" />
    <text x="34" y="75" textAnchor="middle" fontSize="40" fontWeight="700" fill="#fff" textLength={l === "W" ? 31 : l === "N" ? 25 : 21} lengthAdjust="spacingAndGlyphs">{l}</text>
  </g>
);

const dock: { run?: boolean; icon: React.ReactNode }[] = [
  {
    run: true,
    icon: (
      <g>
        <rect x="13.500" y="23" width="80" height="75" rx="4" fill="#f0f3f7" />
        <path d="M17 23h38q-7 20-8 43h12q0 16 2 32H17q-3.500 0-3.500-4V27q0-4 3.500-4z" fill="url(#finder)" />
        <path d="M55 23q-7 20-8 43h12q0 16 2 32" fill="none" stroke="#17355c" strokeWidth="1.500" />
        <path d="M29.500 71q24 20 48 0" fill="none" stroke="#111" strokeWidth="2.500" strokeLinecap="round" />
        <path d="M35 43.500v6M70.500 43.500v6" stroke="#111" strokeWidth="4" strokeLinecap="round" />
      </g>
    ),
  },
  {
    run: true,
    icon: (
      <g>
        <g transform="rotate(-9 53 61)">
          <rect x="21" y="25" width="64" height="74" fill="#f6f6f4" stroke="#f6f6f4" strokeWidth="4.500" strokeDasharray="3 2.500" />
          <rect x="26" y="30" width="54" height="64" fill="url(#sky)" />
        </g>
        <path d="M28 34l4-4 6 3 4 10 6 16 6-2 3 4-2 4 12 6 12 8-6 0-4 4-5-5-8-3-10 2q-10 4-15-3l8-9q-8-14-11-30z" fill="#6b4a2a" />
        <path d="M28 34l4-4 6 3 3 8-8 4z" fill="#dcdcd6" />
        <path d="M34 46l10 15M39 46l6 14M58 72l14 8M56 76l8 3" stroke="#d9c7a4" strokeWidth="1.800" />
        <path d="M33 68l10-3 4 7-6 6z" fill="#a9793d" />
        <path d="M48 60l5-1 3 4-4 2z" fill="#e2d6c0" />
        <g fill="none" stroke="#53606e" strokeOpacity=".5" strokeWidth="1.500">
          <circle cx="78" cy="85" r="21" />
          <circle cx="78" cy="85" r="13" />
          <circle cx="78" cy="85" r="17" strokeWidth="4" strokeDasharray="2 3" />
        </g>
        <FaApple size={17} x="69.500" y="76" color="#4a5d74" />
        <Badge x={75} w={57} t="1,067" />
      </g>
    ),
  },
  {
    icon: (
      <g>
        <circle cx="53.500" cy="61" r="38" fill="#191414" />
        <FaSpotify size={88} x="9.500" y="17" color="#30d968" />
      </g>
    ),
  },
  {
    run: true,
    icon: (
      <g>
        <clipPath id="sl"><rect x="12.500" y="21" width="80" height="80" rx="5" /></clipPath>
        <g clipPath="url(#sl)">
          <path d="M0 0h106v130H0z" fill="#f1f3f5" />
          <path d="M12 21h52l3 10-41 16-14 1z" fill="#7fcbcf" />
          <path d="M63 21h30v54l-14-2z" fill="#e5a02b" />
          <path d="M62 21h31v8l-27 5z" fill="#a6a331" />
          <path d="M12 49l12-4 16 43-28 10z" fill="#45a97f" />
          <path d="M38 88l55-22v36H42z" fill="#d11d3e" />
          <path d="M12 97l26-9 4 14H12z" fill="#27081f" />
        </g>
        <text x="53" y="76" textAnchor="middle" fontSize="41" fontWeight="800" fill="#14181c" textLength="24" lengthAdjust="spacingAndGlyphs">S</text>
        <circle cx="86" cy="31" r="19" fill="#f8403a" />
        <circle cx="86" cy="32" r="3.200" fill="#fff" />
      </g>
    ),
  },
  {
    run: true,
    icon: (
      <g>
        <path d="M52 22c24 0 42 16 42 37S76 94 52 94q-8 0-14-2-6 6-14 6 6-6 5-14-19-9-19-26c0-20 18-36 42-36z" fill="url(#msg)" />
        <path d="M67 56c14 0 26 9 26 21 0 8-4 13-9 16q0 5 4 9-7-1-11-6-4 1-10 1-26-2-26-20 2-20 26-21z" fill="#eef4fa" />
        <g fill="#2162a5"><circle cx="55" cy="77.500" r="4.500" /><circle cx="68" cy="77.500" r="4.500" /><circle cx="81" cy="77.500" r="4.500" /></g>
        <Badge x={86} t="58" />
      </g>
    ),
  },
  {
    icon: (
      <g>
        <circle cx="52" cy="58" r="34" fill="url(#ffb)" />
        <path d="M16 26q4 4 8 4l8 6q6-8 12-8-4 8 0 12 8 2 8 6l-8 8q-6 4-2 10 8 4 14-2 6 2 3 7-4 8-14 8 14 8 26-4t6-28Q70 30 72 13q8 18 16 26l1-10q10 16 10 34-2 42-45 44Q12 105 9 64q0-22 7-38z" fill="url(#ff)" />
        <path d="M72 13q-14 22-4 38 12 14 4 30 18-12 14-34Q74 34 72 13z" fill="#ffe14b" />
      </g>
    ),
  },
  {
    run: true,
    icon: (
      <g transform="translate(52.5 61)">
        <path d="M-37.700-24.400A45 45 0 0 1 40-20.500H0L-17.700 10.200z" fill="#dc4d41" />
        <path d="M40-20.500A45 45 0 0 1-2.200 44.900L17.700 10.200 0-20.500z" fill="#ffce44" />
        <path d="M-2.200 44.900A45 45 0 0 1-37.700-24.400L-17.700 10.200H17.700z" fill="#1f9f5f" />
        <circle r="20.500" fill="#f2f2f2" />
        <circle r="16.500" fill="#4c8af5" />
      </g>
    ),
  },
  {
    run: true,
    icon: (
      <g>
        <path d="M15 27l63-11 12 78-62 11z" fill="#2b2b2f" />
        <path d="M72 23l18 5 7 55-15 8z" fill="#2a94de" />
        <path d="M29 82l53 1 15-8-15 16z" fill="#1a7fca" />
        <path d="M52 36l13 2-28 30-8-4zM28 50l8-2 30 22-2 4z" fill="#3fa2e2" />
        <path d="M65 38l3 30-6 6-3-24z" fill="#1670b3" />
      </g>
    ),
  },
  {
    icon: (
      <Office c1="#6f2395" c2="#8a45b0" l="N">
        <path d="M86 30h10v18H86z" fill="#fff" />
        <path d="M86 52h10v18H86zM86 74h10v18H86z" fill="#a878c8" />
        <rect x="58" y="27" width="33" height="67" fill="#fff" />
        <path d="M60 38h22M60 47h22M60 56h22M60 65h22M60 74h22M60 84h22" stroke="#333" strokeWidth="3" />
      </Office>
    ),
  },
  {
    icon: (
      <g>
        <circle cx="53.500" cy="58" r="43" fill="#f7753a" />
        <path d="M62 44L40 60l-14 14h8l-4 6 18-12 18-22z" fill="#fba12f" stroke="#fff" strokeWidth="1.500" />
        <path d="M66 46L48 70 30 84 14 98l6 8 2-8 24-20 20-24z" fill="#a9a9a9" stroke="#fff" strokeWidth="1.500" />
        <path d="M6 105l8-7 6 7z" fill="#f7753a" />
        <circle cx="72" cy="38" r="11" fill="#a0a0a0" stroke="#fff" strokeWidth="1.500" />
        <path d="M81 33l-11 5 8 6z" fill="#777" stroke="#fff" />
      </g>
    ),
  },
  {
    run: true,
    icon: (
      <g>
        <path d="M15 26l63-10 12 78-62 10z" fill="#f8f8f8" stroke="#c8a24e" strokeWidth=".8" />
        <path d="M15 26l63-10 2 13-63 10z" fill="#fdd23f" />
        <g stroke="#cfcfcf" strokeWidth="1">
          <path d="M18 46l63-10M19 52l63-10M20 58l63-10M21 64l63-10M22 70l63-10M23 76l63-10M24 82l63-10M25 88l63-10M26 94l63-10M27 100l63-10" />
        </g>
      </g>
    ),
  },
  {
    run: true,
    icon: (
      <g>
        <path d="M11 32l8 71 73-12-10-68z" fill="#4b5358" />
        <path d="M13 30l68-11 10 66-70 11z" fill="#f4f4f4" />
        <path d="M13 30l68-11 3 18-68 11z" fill="#e65250" />
        <text x="46" y="41" textAnchor="middle" fontSize="17" fill="#fff" transform="rotate(-9 46 38)" textLength="32" lengthAdjust="spacingAndGlyphs">MAY</text>
        <text x="52" y="81" textAnchor="middle" fontSize="42" fontWeight="300" fill="#222" transform="rotate(-9 52 66)" textLength="48">29</text>
        <Badge x={86} t="9" />
      </g>
    ),
  },
  {
    icon: (
      <g>
        <circle cx="52.500" cy="61" r="41.500" fill="url(#as)" stroke="#dfe3e8" strokeWidth="3" />
        <g stroke="#fff" strokeWidth="7" strokeLinecap="round">
          <path d="M56 37L37 71M49 37l24 42M29 67h26M65 67h12M33 78l-3 4" />
        </g>
      </g>
    ),
  },
  {
    icon: (
      <g>
        <clipPath id="ac"><circle cx="52.500" cy="59.500" r="45.500" /></clipPath>
        <circle cx="52.500" cy="59.500" r="45.500" fill="url(#ball)" />
        <g clipPath="url(#ac)" fill="none">
          <circle cx="26" cy="78" r="18" fill="#cfd8d8" />
          <path d="M34 70q22-4 24 34" stroke="#dfe3e4" strokeWidth="8" />
          <path d="M4 66Q16 38 42 38q24 1 36 20" stroke="url(#acg)" strokeWidth="11" />
          <path d="M70 8Q50 22 46 40q0 26 30 29h26" stroke="url(#acb)" strokeWidth="9" />
          <path d="M76 54q20 26-6 56" stroke="#1f5fae" strokeWidth="12" />
          <ellipse cx="42" cy="32" rx="34" ry="20" fill="#fff" opacity=".22" />
        </g>
      </g>
    ),
  },
  {
    run: true,
    icon: (
      <g>
        <rect x="13" y="25" width="81" height="72" rx="3" fill="#212121" stroke="#d4d4d4" strokeWidth="2" />
        <text x="20" y="52" fontSize="22" fill="#2bea2b" className="font-['Liberation_Mono']">$</text>
        <rect x="35" y="34" width="11" height="22" fill="#22a722" />
      </g>
    ),
  },
  {
    icon: (
      <g>
        <rect x="10.500" y="24.500" width="83" height="73" rx="4" fill="#0b0f0e" stroke="#aeb4b6" strokeWidth="2" />
        <path d="M17 31h70v60H17z" fill="#17211f" />
        <path d="M17 43h70M17 61h70M17 79h70M27 31v60M37 31v60M47 31v60M57 31v60M67 31v60M77 31v60" stroke="#48635c" strokeWidth="1" />
        <path d="M17 67h14l3-5 4 5h6l2-30 3 38 3-8h4q3-1 4 0l4-8q3-2 6 8l4-3 4 3 6 1" fill="none" stroke="#7ed6bb" strokeWidth="2" />
      </g>
    ),
  },
  {
    run: true,
    icon: (
      <g strokeWidth="2" strokeLinejoin="round">
        <path d="M41 22l15-5q3-1 3 4v81l-16 5q-3 0-3-4z" fill="#cfcfcf" />
        <path d="M13 28l7-10q2-3 5 0l54 65q2 3 0 6l-6 8q-2 2-5-1L32 66 15 38q-2-5-2-10z" fill="#aadff2" />
        <path d="M18 52q1-2 4-2l75 2q4 0 3 4l-6 14q-1 2-4 2l-77-2q-4 0-3-4z" fill="#1e96d4" />
        <path d="M66 28q2-2 5-1l5 3q4 4 3 14L33 92q-2 2-5 1l-11-3q-4-2-2-6z" fill="#6fbf46" />
        <path d="M46 51.500l18 .5-15 20H36z" fill="#2f8f3c" />
        <path d="M41 56l5-5h13v9l-9 12-9-1z" fill="#0b4a2c" />
      </g>
    ),
  },
  {
    run: true,
    icon: (
      <Office c1="#d9452b" c2="#ea6a4b" l="P">
        <rect x="58" y="30" width="37" height="62" fill="#fff" />
        <path d="M72 40v14l12 4a13 14 0 1 1-12-18z" fill="#3a3a3a" />
        <path d="M74 38a13 13 0 0 1 13 13H74z" fill="#e36a50" />
        <path d="M60 72h28M60 81h28" stroke="#df6448" strokeWidth="3" />
      </Office>
    ),
  },
  {
    run: true,
    icon: (
      <g>
        <circle cx="52.500" cy="61" r="41.500" fill="#f8f8fb" stroke="url(#it)" strokeWidth="4" />
        <path d="M42 82V38l27-6v43" fill="none" stroke="url(#it2)" strokeWidth="5" />
        <path d="M40 38l31-6v10l-31 6z" fill="#f0508c" />
        <ellipse cx="36" cy="81" rx="8.500" ry="7" fill="#9a57f5" />
        <ellipse cx="63" cy="75" rx="8.500" ry="7" fill="#3aa5f5" />
      </g>
    ),
  },
  {
    run: true,
    icon: (
      <Office c1="#2b569f" c2="#4478bd" l="W">
        <rect x="58" y="27" width="37" height="67" fill="#fff" />
        <path d="M60 38h28M60 47h28M60 56h28M60 65h28M60 74h28M60 84h28" stroke="#333" strokeWidth="3" />
        <path d="M62 38h12M76 47h12M62 56h9M68 65h10M76 74h12M60 84h10" stroke="#4d75b5" strokeWidth="3" />
      </Office>
    ),
  },
  {
    run: true,
    icon: (
      <g>
        <path d="M7 14h92v90H7z" fill="#f8351f" />
        <path d="M11 18h84v81H11z" fill="#2a0504" />
        <path d="M26 83c-3 5 4 4 8-3 8-12 18-32 18-44 0-6-5-6-5 0 1 16 14 32 26 35 8 1 9-6 2-7-14-2-30 4-45 12-3 2-3 5-4 7z" fill="none" stroke="#fff" strokeWidth="2.500" />
      </g>
    ),
  },
];

/* Streaky grain laid over the wooden desktop. */
const Grain = ({ id, seed }: { id: string; seed: number }) => (
  <svg width="86" height="118" className="mt-[12px] block opacity-60">
    <filter id={id} x="0" y="0" width="1" height="1">
      <feTurbulence type="fractalNoise" baseFrequency="0.025 0.35" numOctaves="3" seed={seed} />
      <feColorMatrix values="0 0 0 0 0.05  0 0 0 0 0.03  0 0 0 0 0.02  2.600 0 0 0 -0.9" />
    </filter>
    <rect width="86" height="118" filter={`url(#${id})`} />
  </svg>
);

function Dock() {
  return (
    <div className="flex h-[130px] shrink-0 overflow-hidden bg-[#1d0f08]">
      <div className="w-[86px] shrink-0 bg-[linear-gradient(180deg,#0a0809_0px,#1c1c1d_11px,#1c1110_12px,#4b312a_45px,#55382e_75px,#50372e_100px,#5e4437_130px)]">
        <Grain id="grainL" seed={4} />
      </div>
      <div className="flex w-[2388px] shrink-0 rounded-t-[10px] bg-[radial-gradient(ellipse_600px_120px_at_500px_125px,#c48571,transparent),radial-gradient(ellipse_520px_130px_at_1560px_130px,#f29330,transparent),linear-gradient(90deg,#73615c,#8b6658_500px,#8f6547_900px,#a2693f_1400px,#946742_1800px,#7a6646_2150px,#96693c)] pl-[8px]">
        {dock.map((d, i) => (
          <div key={i} className="relative w-[105.7px] shrink-0">
            <svg width="106" height="130" viewBox="0 0 106 130" className="block overflow-visible drop-shadow-[0_2px_2px_rgba(0,0,0,0.25)]">{d.icon}</svg>
            {d.run && <div className="absolute bottom-[4px] left-[48px] size-[8px] rounded-full bg-[#2a0303]" />}
          </div>
        ))}
        <div className="mt-[18px] ml-[23px] h-[94px] w-[2px] shrink-0 bg-[#6b4a22]" />
        <svg width="70" height="130" viewBox="0 0 70 130" className="ml-[39px] shrink-0">
          <path d="M0 26l10 72q2 7 25 7t25-7l10-72z" fill="url(#can)" />
          <ellipse cx="35" cy="27" rx="34" ry="9" fill="#9c9c9c" stroke="#e8e8e8" strokeWidth="2" />
          <path d="M6 26l6-10 8-2 6 2 6 6 8-8 8 3 4 8 8-5 4 8-12 6-34-1z" fill="#e2e2e2" />
          <path d="M14 22l6-3 4 12zM38 24l5-9 6 14z" fill="#56607a" />
          <path d="M24 24l8-2 2 8z" fill="#35b8c8" />
          <path d="M44 26l6-3v7z" fill="#c24c37" />
        </svg>
      </div>
      <div className="grow bg-[linear-gradient(180deg,#050505_0px,#161616_11px,#2a1a06_12px,#6b4410_35px,#7e500f_58px,#a8701c_80px,#cf8823_100px,#b0741f_130px)]">
        <Grain id="grainR" seed={9} />
      </div>
      <svg width="0" height="0" className="absolute">
        <defs>
          <linearGradient id="finder" x2="0" y2="1"><stop stopColor="#2ed3fb" /><stop offset="1" stopColor="#2577f1" /></linearGradient>
          <linearGradient id="sky" x2="0" y2="1"><stop stopColor="#2f7fdc" /><stop offset="1" stopColor="#9dcbf0" /></linearGradient>
          <linearGradient id="msg" x2="0" y2="1"><stop stopColor="#5cc5f9" /><stop offset="1" stopColor="#2789fb" /></linearGradient>
          <linearGradient id="ff" x1="1" x2="0" y2="1"><stop stopColor="#ffcf35" /><stop offset=".45" stopColor="#ff7a2c" /><stop offset="1" stopColor="#e31587" /></linearGradient>
          <linearGradient id="ffb" x2="0" y2="1"><stop stopColor="#1b9bf0" /><stop offset="1" stopColor="#2f2a8f" /></linearGradient>
          <linearGradient id="as" x2="0" y2="1"><stop stopColor="#24bdfb" /><stop offset="1" stopColor="#1f6cf2" /></linearGradient>
          <linearGradient id="it" x2="0" y2="1"><stop stopColor="#fb4a5f" /><stop offset=".5" stopColor="#a667d8" /><stop offset="1" stopColor="#38b4f8" /></linearGradient>
          <linearGradient id="it2" x2="0" y2="1"><stop stopColor="#f8486a" /><stop offset="1" stopColor="#6a7cf5" /></linearGradient>
          <linearGradient id="can"><stop stopColor="#c9c9c9" /><stop offset=".3" stopColor="#ececec" /><stop offset="1" stopColor="#bdbdbd" /></linearGradient>
          <linearGradient id="ball" x2="0" y2="1"><stop stopColor="#d3d6d8" /><stop offset="1" stopColor="#f4f6f7" /></linearGradient>
          <linearGradient id="acg"><stop stopColor="#3f9a1c" /><stop offset=".5" stopColor="#6f9f62" /><stop offset="1" stopColor="#2a5f9a" /></linearGradient>
          <linearGradient id="acb" x2="0" y2="1"><stop stopColor="#4c9a36" /><stop offset=".5" stopColor="#7ba386" /><stop offset="1" stopColor="#1f5fae" /></linearGradient>
        </defs>
      </svg>
    </div>
  );
}

export default function App() {
  return (
    <div className="relative flex h-[1600px] w-[2560px] flex-col overflow-hidden bg-[#05070a] font-['Inter',sans-serif] [font-variation-settings:'opsz'_14]">
      <MenuBar />
      <div className="relative mt-[2px] flex shrink-0 flex-col">
        <TabStrip />
        <Toolbar />
        <Bookmarks />
        <Page />
        <div className="pointer-events-none absolute inset-x-0 bottom-0 h-[90px] rounded-b-[10px] bg-linear-to-t from-black/10 to-transparent" />
        <div className="absolute bottom-0 left-0 flex h-[36px] w-[1502px] items-center rounded-tr-[6px] rounded-bl-[6px] border-2 border-[#a8a8a8] bg-linear-to-b from-[#ebebeb] to-[#dcdcdc] pl-[7px] text-[24px] leading-none text-black">
          <T w={1481}>https://prodcore-gse00015257.uscom-east-1.oraclecloud.com/mobileui/mobilebackend/f8441c6c-cdf1-432c-9ab2-0d02a5b63750/storage#</T>
        </div>
      </div>
      <Dock />
    </div>
  );
}
